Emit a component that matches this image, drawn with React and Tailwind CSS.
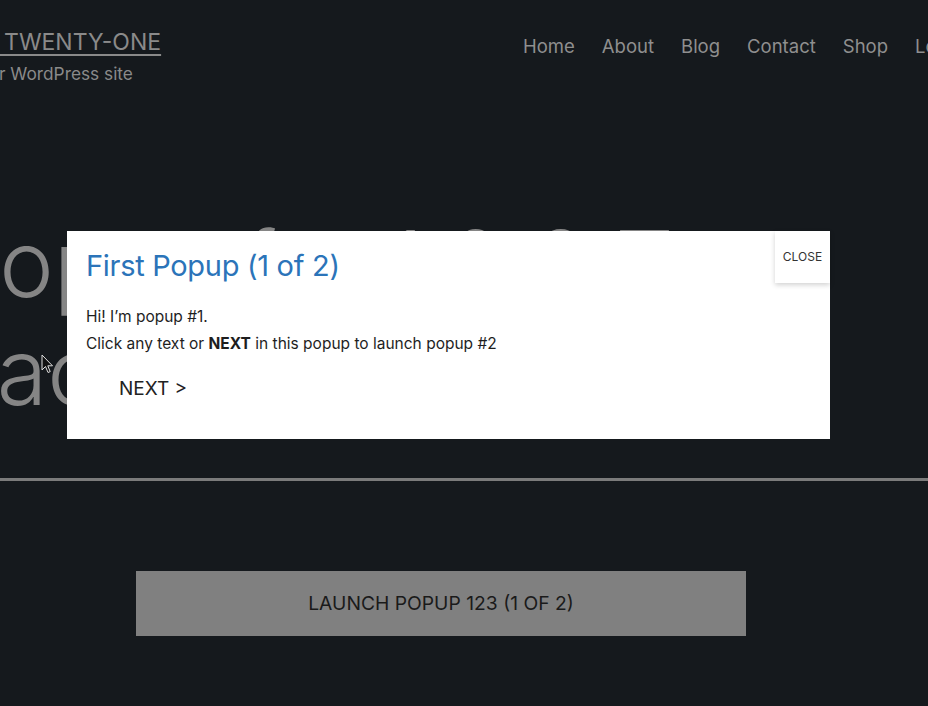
import React from 'react';

const navItems = ['Home', 'About', 'Blog', 'Contact', 'Shop', 'Log in'];

const Cursor = () => (
    <svg width="13" height="20" viewBox="0 0 13 20" className="absolute left-[41px] top-[354px]">
        <path d="M1 1 L1 16 L4.5 12.5 L7 18.5 L9.2 17.6 L6.8 11.8 L11.5 11.8 Z" fill="#111" stroke="#ddd" strokeWidth="1" strokeLinejoin="round" />
    </svg>
);

const Popup = () => (
    <div className="absolute left-[67px] top-[231px] w-[763px] h-[208px] bg-white font-['Inter',sans-serif]">
        {/* close tab in the corner */}
        <button className="absolute right-0 top-0 w-[55px] h-[52px] bg-white text-[12px] text-[#333] shadow-[0_2px_5px_rgba(0,0,0,0.18)] flex items-center justify-center">
            CLOSE
        </button>
        <div className="pl-[19px] pt-[17px]">
            <h2 className="text-[29px] leading-[36px] tracking-[-0.3px] text-[#2b74b9]">First Popup (1 of 2)</h2>
            <div className="mt-[19px] text-[15.5px] leading-[27px] text-[#1e1e1e]">
                <p>Hi! I’m popup #1.</p>
                <p>
                    Click any text or <strong className="font-bold">NEXT</strong> in this popup to launch popup #2
                </p>
            </div>
            <div className="mt-[20px] pl-[33px] text-[19px] leading-[24px] text-[#222]">NEXT &gt;</div>
        </div>
    </div>
);

export default function App() {
    return (
        <div className="relative w-[928px] h-[706px] overflow-hidden bg-[#15191d] font-['Inter',sans-serif]">
            {/* header */}
            <header className="flex items-start pt-[26px]">
                <div className="w-[621px] shrink-0 -ml-[98px]">
                    <div className="-ml-[4px] text-[23px] leading-[32px] text-[#8a8a8a] underline underline-offset-[4px] decoration-[1.5px] whitespace-nowrap">
                        TWENTY TWENTY-ONE
                    </div>
                    <div className="mt-[4px] ml-[1px] text-[17.3px] leading-[24px] text-[#8a8a8a] whitespace-nowrap">
                        Just another WordPress site
                    </div>
                </div>
                <nav className="mt-[8px] flex gap-[27px] text-[18.5px] leading-[24px] text-[#8f8f8f] whitespace-nowrap">
                    {navItems.map((item) => (
                        <span key={item}>{item}</span>
                    ))}
                </nav>
            </header>

            {/* page title, mostly hidden behind the popup */}
            <h1 className="mt-[124px] -ml-[58px] text-[92px] leading-[108px] font-light text-[#858585] whitespace-nowrap">
                <div>Popup for 1 &amp; 2 Test</div>
                <div>Each Popup Launch</div>
            </h1>

            <div className="mt-[52px] h-[3px] bg-[#7b7b7b]" />

            <div className="mt-[90px] pl-[136px]">
                <button className="w-[610px] h-[65px] bg-[#808080] text-[19.3px] text-[#1a1a1a]">
                    LAUNCH POPUP 123 (1 OF 2)
                </button>
            </div>

            <Popup />
            <Cursor />
        </div>
    );
}
